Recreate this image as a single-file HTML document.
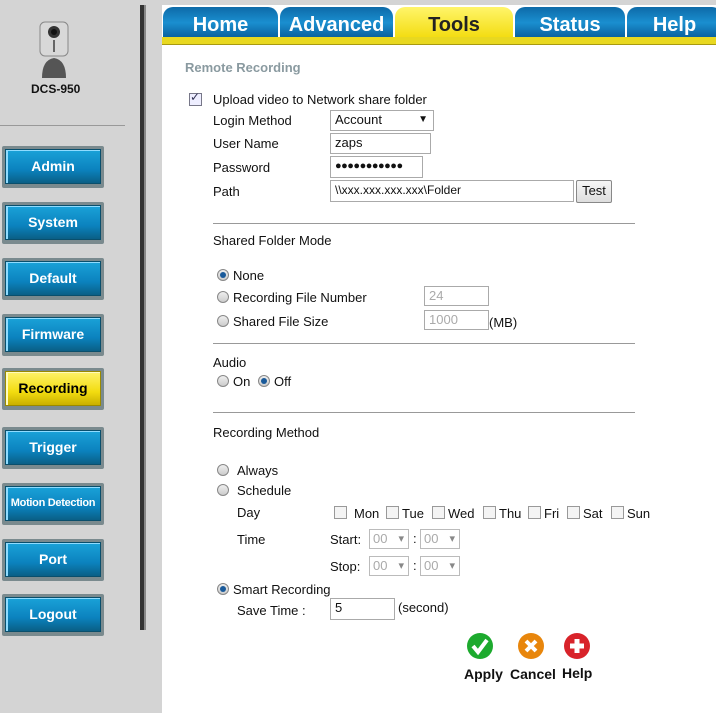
<!DOCTYPE html>
<html><head><style>
body{margin:0;width:716px;height:713px;position:relative;background:#fff;font-family:"Liberation Sans",Arial,sans-serif;font-size:13px;color:#111;overflow:hidden}
.a{position:absolute;white-space:nowrap}
.side{position:absolute;left:0;top:0;width:162px;height:713px;background:#d4d4d4}
.btn{position:absolute;left:2px;width:102px;height:42px;background:#7a8a8e;border-radius:2px}
.btn div{position:absolute;left:3px;top:3px;width:94px;height:33px;background:linear-gradient(#1aa2d8,#0b82be 60%,#0a5f86);border:1px solid #0a4f6c;color:#fff;font-weight:bold;font-size:14px;text-align:center;line-height:33px;box-shadow:inset 4px 3px 0 -2px #8fdcff}
.btn.y div{background:linear-gradient(#fff36a,#f2dc10 60%,#c9b000);color:#000;border-color:#9a8a00;box-shadow:inset 4px 3px 0 -2px #fffcc0}
.tab{position:absolute;top:7px;height:31px;background:linear-gradient(#0d6aa8,#1a8fd0 50%,#0a5f9c);border-radius:10px 10px 0 0;color:#fff;font-weight:bold;font-size:20px;text-align:center;line-height:36px}
.inp{position:absolute;border:1px solid #aaa;background:#fff;height:20px;box-sizing:border-box;font-size:13px;padding-left:4px;line-height:18px}
.rad{position:absolute;width:10px;height:10px;border-radius:50%;border:1px solid #888;background:linear-gradient(#eee,#ccc)}
.rad.on::after{content:"";position:absolute;left:2px;top:2px;width:6px;height:6px;border-radius:50%;background:#1a5a9a}
.cb{position:absolute;width:11px;height:11px;border:1px solid #999;background:#f4f4f4}
.hr{position:absolute;left:213px;width:422px;height:1px;background:#999}
.sel{position:absolute;width:40px;height:20px;border:1px solid #bbb;box-sizing:border-box;color:#aaa;font-size:13px;padding-left:3px;line-height:18px}
.sel::after{content:"▾";position:absolute;right:4px;top:0;color:#888;font-size:11px}
</style></head><body>
<div class="side"></div>
<div class="a" style="left:0;top:0;width:716px;height:5px;background:#d4d4d4"></div>
<div class="a" style="left:140px;top:5px;width:4px;height:625px;background:#333"></div>
<div class="a" style="left:144px;top:5px;width:2px;height:625px;background:#888"></div>
<div class="a" style="left:0;top:125px;width:125px;height:1px;background:#999"></div>
<svg class="a" style="left:34px;top:20px" width="40" height="62" viewBox="0 0 40 62">
<rect x="6" y="2" width="28" height="34" rx="5" fill="#d8d8d8" stroke="#888"/>
<circle cx="20" cy="12" r="6" fill="#333"/><circle cx="20" cy="12" r="3" fill="#111"/>
<rect x="19" y="20" width="2" height="12" fill="#666"/>
<path d="M8 58 Q8 40 20 38 Q32 40 32 58 Z" fill="#555"/>
</svg>
<div class="a" style="left:31px;top:82px;font-weight:bold;font-size:12px">DCS-950</div>
<div class="btn" style="top:146px"><div>Admin</div></div>
<div class="btn" style="top:202px"><div>System</div></div>
<div class="btn" style="top:258px"><div>Default</div></div>
<div class="btn" style="top:314px"><div>Firmware</div></div>
<div class="btn y" style="top:368px"><div>Recording</div></div>
<div class="btn" style="top:427px"><div>Trigger</div></div>
<div class="btn" style="top:483px"><div style="font-size:11px;letter-spacing:-.3px">Motion Detection</div></div>
<div class="btn" style="top:539px"><div>Port</div></div>
<div class="btn" style="top:594px"><div>Logout</div></div>
<div class="a" style="left:162px;top:5px;width:554px;height:33px;background:#fff"></div>
<div class="tab" style="left:163px;width:115px">Home</div>
<div class="tab" style="left:280px;width:113px">Advanced</div>
<div class="tab" style="left:395px;width:118px;background:linear-gradient(#fff56a,#f3dc10);color:#222">Tools</div>
<div class="tab" style="left:515px;width:110px">Status</div>
<div class="tab" style="left:627px;width:95px">Help</div>
<div class="a" style="left:162px;top:37px;width:554px;height:7px;background:#e8d820;border-bottom:1px solid #a89a10"></div>
<div class="a" style="left:185px;top:60px;color:#8a9aa0;font-weight:bold;font-size:13px">Remote Recording</div>
<div class="cb" style="left:189px;top:93px;background:#eef;border-color:#778"></div><div class="a" style="left:190px;top:90px;color:#335;font-size:12px">✓</div>
<div class="a" style="left:213px;top:92px">Upload video to Network share folder</div>
<div class="a" style="left:213px;top:113px">Login Method</div>
<div class="inp" style="left:330px;top:110px;width:104px;height:21px">Account<span style="position:absolute;right:5px;font-size:10px">▼</span></div>
<div class="a" style="left:213px;top:136px">User Name</div>
<div class="inp" style="left:330px;top:133px;width:101px;height:21px">zaps</div>
<div class="a" style="left:213px;top:160px">Password</div>
<div class="inp" style="left:330px;top:156px;width:93px;height:22px;font-size:11px;letter-spacing:-.5px">●●●●●●●●●●●</div>
<div class="a" style="left:213px;top:184px">Path</div>
<div class="inp" style="left:330px;top:180px;width:244px;height:22px;font-size:12px">\\xxx.xxx.xxx.xxx\Folder</div>
<div class="a" style="left:576px;top:180px;width:34px;height:21px;border:1px solid #888;border-radius:2px;background:linear-gradient(#f6f6f6,#ddd);text-align:center;line-height:20px">Test</div>
<div class="hr" style="top:223px"></div>
<div class="a" style="left:213px;top:233px">Shared Folder Mode</div>
<div class="rad on" style="left:217px;top:269px"></div><div class="a" style="left:233px;top:268px">None</div>
<div class="rad" style="left:217px;top:291px"></div><div class="a" style="left:233px;top:290px">Recording File Number</div>
<div class="inp" style="left:424px;top:286px;width:65px;color:#aaa">24</div>
<div class="rad" style="left:217px;top:315px"></div><div class="a" style="left:233px;top:314px">Shared File Size</div>
<div class="inp" style="left:424px;top:310px;width:65px;color:#aaa">1000</div><div class="a" style="left:489px;top:315px">(MB)</div>
<div class="hr" style="top:343px"></div>
<div class="a" style="left:213px;top:355px">Audio</div>
<div class="rad" style="left:217px;top:375px"></div><div class="a" style="left:233px;top:374px">On</div>
<div class="rad on" style="left:258px;top:375px"></div><div class="a" style="left:274px;top:374px">Off</div>
<div class="hr" style="top:412px"></div>
<div class="a" style="left:213px;top:425px">Recording Method</div>
<div class="rad" style="left:217px;top:464px"></div><div class="a" style="left:237px;top:463px">Always</div>
<div class="rad" style="left:217px;top:484px"></div><div class="a" style="left:237px;top:483px">Schedule</div>
<div class="a" style="left:237px;top:505px">Day</div>
<div class="cb" style="left:334px;top:506px"></div><div class="a" style="left:354px;top:506px">Mon</div>
<div class="cb" style="left:386px;top:506px"></div><div class="a" style="left:402px;top:506px">Tue</div>
<div class="cb" style="left:432px;top:506px"></div><div class="a" style="left:448px;top:506px">Wed</div>
<div class="cb" style="left:483px;top:506px"></div><div class="a" style="left:499px;top:506px">Thu</div>
<div class="cb" style="left:528px;top:506px"></div><div class="a" style="left:544px;top:506px">Fri</div>
<div class="cb" style="left:567px;top:506px"></div><div class="a" style="left:583px;top:506px">Sat</div>
<div class="cb" style="left:611px;top:506px"></div><div class="a" style="left:627px;top:506px">Sun</div>
<div class="a" style="left:237px;top:532px">Time</div>
<div class="a" style="left:330px;top:532px">Start:</div>
<div class="sel" style="left:369px;top:529px">00</div><div class="a" style="left:413px;top:531px">:</div><div class="sel" style="left:420px;top:529px">00</div>
<div class="a" style="left:330px;top:559px">Stop:</div>
<div class="sel" style="left:369px;top:556px">00</div><div class="a" style="left:413px;top:558px">:</div><div class="sel" style="left:420px;top:556px">00</div>
<div class="rad on" style="left:217px;top:583px"></div><div class="a" style="left:233px;top:582px">Smart Recording</div>
<div class="a" style="left:237px;top:603px">Save Time :</div>
<div class="inp" style="left:330px;top:598px;width:65px;height:22px">5</div>
<div class="a" style="left:398px;top:600px">(second)</div>
<svg class="a" style="left:466px;top:632px" width="28" height="28"><circle cx="14" cy="14" r="13" fill="#1daa2e"/><path d="M7 14 L12 20 L21 8" stroke="#fff" stroke-width="4" fill="none"/></svg>
<svg class="a" style="left:517px;top:632px" width="28" height="28"><circle cx="14" cy="14" r="13" fill="#e8860c"/><path d="M9 9 L19 19 M19 9 L9 19" stroke="#fff" stroke-width="4"/></svg>
<svg class="a" style="left:563px;top:632px" width="28" height="28"><circle cx="14" cy="14" r="13" fill="#d8232a"/><path d="M14 7 V21 M7 14 H21" stroke="#fff" stroke-width="5"/></svg>
<div class="a" style="left:464px;top:666px;font-weight:bold;font-size:14px">Apply</div>
<div class="a" style="left:510px;top:666px;font-weight:bold;font-size:14px">Cancel</div>
<div class="a" style="left:562px;top:665px;font-weight:bold;font-size:14px">Help</div>
</body></html>
